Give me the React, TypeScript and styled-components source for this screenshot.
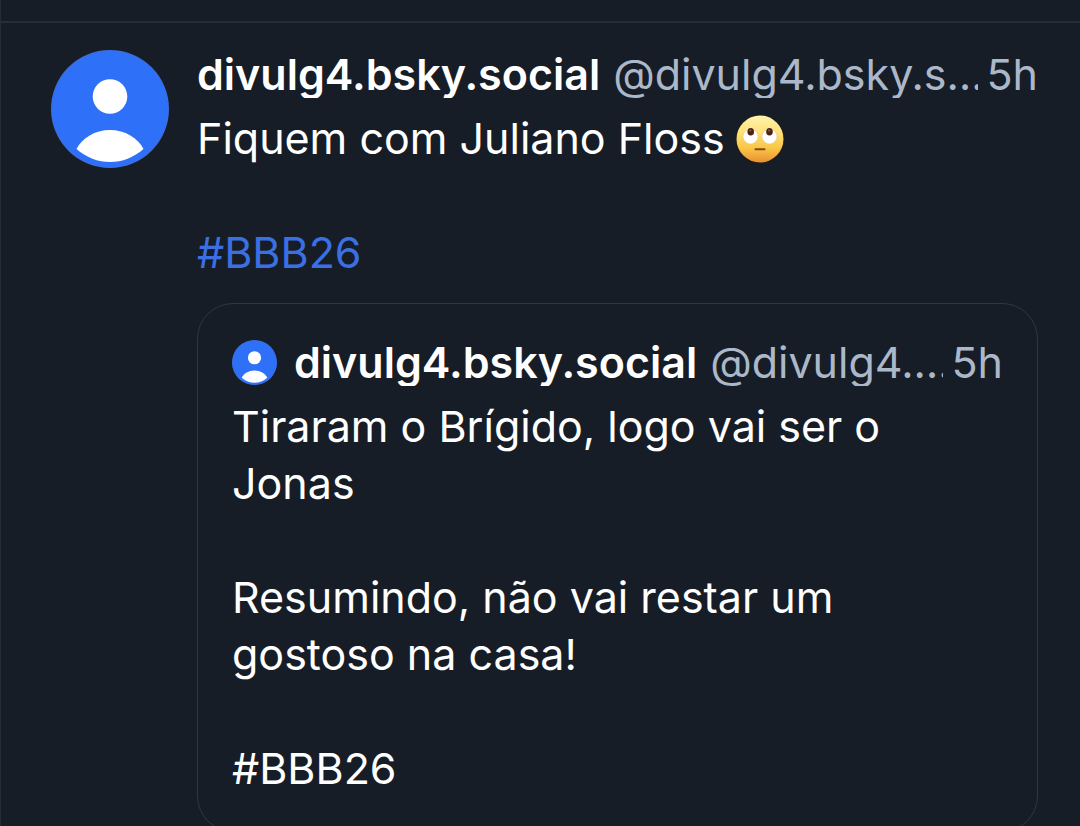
import React from "react";
import styled, { createGlobalStyle } from "styled-components";

const GlobalStyle = createGlobalStyle`
  * { box-sizing: border-box; }
  body {
    margin: 0;
    background: #171d26;
    color: #ffffff;
    font-family: Inter, "Liberation Sans", sans-serif;
    font-size: 43px;
    line-height: 57px;
  }
`;

const Feed = styled.main`
  height: 100vh;
  overflow: hidden;
  padding-top: 21px;
  border-left: 1px solid #232c38;
`;

const Post = styled.article`
  display: flex;
  align-items: flex-start;
  gap: 28px;
  padding: 27px 42px 40px 50px;
  border-top: 2px solid #252d39;
`;

const Avatar = styled.svg<{ $size: number }>`
  display: block;
  flex: none;
  width: ${(p) => p.$size}px;
  height: ${(p) => p.$size}px;
`;

const Content = styled.div`
  flex: 1;
  min-width: 0;
`;

const Byline = styled.header`
  display: flex;
  align-items: center;
  height: 48px;
  line-height: 48px;
  white-space: nowrap;
`;

const AuthorLine = styled.div`
  display: flex;
  flex: 1;
  min-width: 0;
  height: 48px;
  overflow: hidden;
`;

const QuoteAvatar = styled.span`
  margin-right: 17px;
`;

const Name = styled.a`
  flex: none;
  color: #ffffff;
  font-weight: 600;
  text-decoration: none;
`;

const Handle = styled.a`
  flex: 1;
  min-width: 0;
  margin-left: 13px;
  overflow: hidden;
  color: #abb8c9;
  text-decoration: none;
`;

const Time = styled.time`
  margin-left: 8px;
  color: #abb8c9;
`;

const Text = styled.p`
  margin: 0;
  padding-top: 12px;
  white-space: pre-line;
`;

const Tag = styled.a`
  color: #3b70e4;
  text-decoration: none;
`;

const Emoji = styled.svg`
  width: 50px;
  height: 50px;
  margin-left: -2px;
  vertical-align: -10px;
`;

const Quote = styled.section`
  margin-top: 22px;
  padding: 34px;
  border: 1px solid #2e3745;
  border-radius: 36px;
`;

function UserAvatar({ size }: { size: number }) {
  return (
    <Avatar $size={size} viewBox="0 0 118 118" role="img" aria-label="Avatar">
      <circle cx="59" cy="59" r="59" fill="#3f6fd8" />
      <circle cx="59" cy="59" r="58" fill="#2e70f8" />
      <circle cx="59" cy="46.500" r="17.300" fill="#fff" />
      <path d="M25.500 99C31 88 44 80 59 80s28 8 33.500 19C83 107.500 71 112 59 112s-24-4.500-33.500-13Z" fill="#fff" />
    </Avatar>
  );
}

function RollingEyes() {
  return (
    <Emoji viewBox="0 0 50 50" role="img" aria-label="Rolling eyes">
      <defs>
        <linearGradient id="face" x1="0" y1="0" x2="0" y2="1">
          <stop offset="0" stopColor="#fff3b0" />
          <stop offset="0.35" stopColor="#ffe27a" />
          <stop offset="0.7" stopColor="#fac545" />
          <stop offset="1" stopColor="#e88f32" />
        </linearGradient>
      </defs>
      <circle cx="25" cy="25" r="24.500" fill="#211c16" />
      <circle cx="25" cy="25" r="23.500" fill="url(#face)" />
      <circle cx="15.500" cy="22.500" r="7.500" fill="#fff" stroke="#e7c77a" strokeWidth="0.600" />
      <circle cx="34.500" cy="22.500" r="7.500" fill="#fff" stroke="#e7c77a" strokeWidth="0.600" />
      <ellipse cx="15.700" cy="17.800" rx="3.300" ry="3.800" fill="#4a2218" />
      <ellipse cx="34.500" cy="17.800" rx="3.300" ry="3.800" fill="#4a2218" />
      <circle cx="15.300" cy="16.500" r="1" fill="#8a6558" />
      <circle cx="34.100" cy="16.500" r="1" fill="#8a6558" />
      <rect x="19.500" y="34.300" width="11" height="2" rx="1" fill="#81451b" />
    </Emoji>
  );
}

function PostByline({ handle, quoted }: { handle: string; quoted?: boolean }) {
  return (
    <Byline>
      {quoted && (
        <QuoteAvatar>
          <UserAvatar size={45} />
        </QuoteAvatar>
      )}
      <AuthorLine>
        <Name href="#profile">divulg4.bsky.social</Name>
        <Handle href="#profile">{handle}</Handle>
      </AuthorLine>
      <Time>5h</Time>
    </Byline>
  );
}

export default function App() {
  return (
    <>
      <GlobalStyle />
      <Feed>
        <Post>
          <UserAvatar size={118} />
          <Content>
            <PostByline handle="@divulg4.bsky.s…" />
            <Text>
              Fiquem com Juliano Floss <RollingEyes />
              {"\n\n"}
              <Tag href="#BBB26">#BBB26</Tag>
            </Text>
            <Quote>
              <PostByline handle="@divulg4.…" quoted />
              <Text>
                {"Tiraram o Brígido, logo vai ser o Jonas\n\nResumindo, não vai restar um gostoso na casa!\n\n#BBB26"}
              </Text>
            </Quote>
          </Content>
        </Post>
      </Feed>
    </>
  );
}
